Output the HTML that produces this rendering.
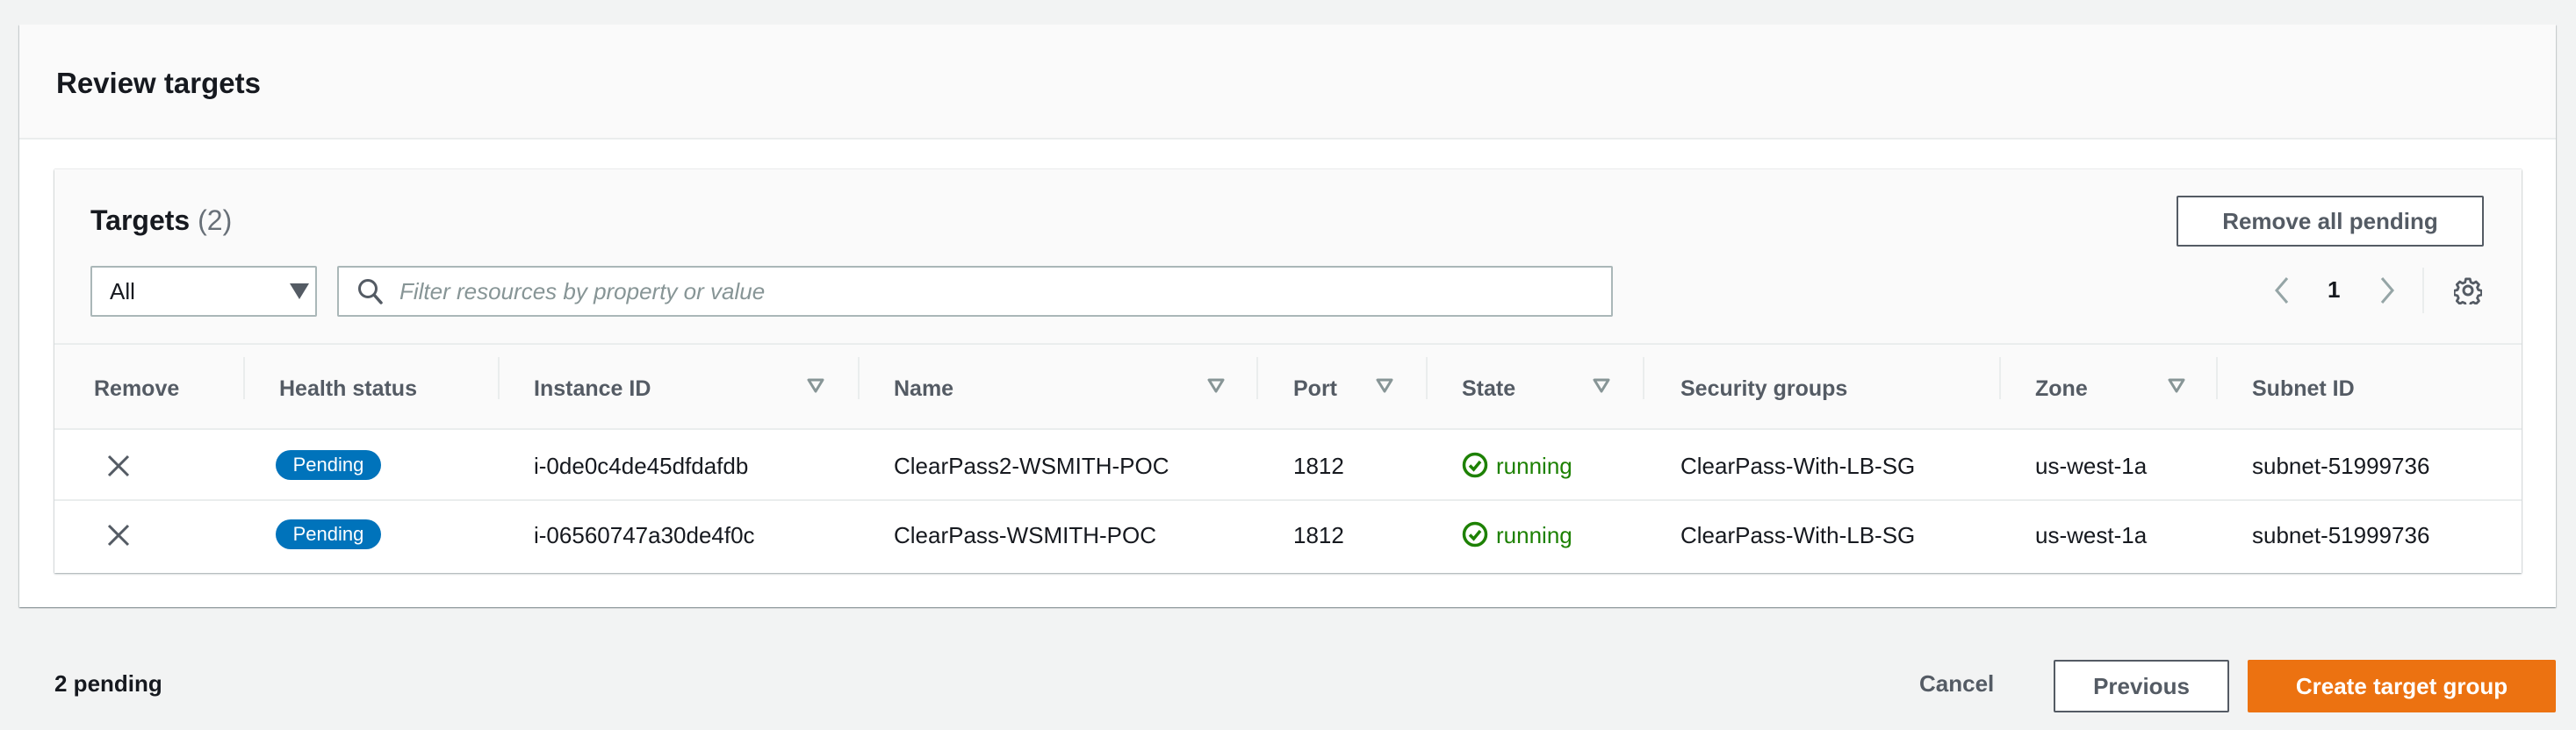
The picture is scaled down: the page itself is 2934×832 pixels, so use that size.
<!DOCTYPE html>
<html><head><meta charset="utf-8"><style>
*{box-sizing:border-box;margin:0;padding:0}
body{width:2934px;height:832px;background:#f2f3f3;font-family:"Liberation Sans",sans-serif;color:#16191f;position:relative;overflow:hidden}
.a{position:absolute;white-space:nowrap}
.card{position:absolute;left:22px;top:28px;width:2889px;height:664px;background:#fff;box-shadow:0 1px 1px rgba(0,28,36,.3),1px 1px 1px rgba(0,28,36,.15),-1px 1px 1px rgba(0,28,36,.15)}
.hdr{position:absolute;left:0;top:0;width:100%;height:131px;background:#fafafa;border-bottom:2px solid #eaeded}
.tbl{position:absolute;left:40px;top:165px;width:2810px;height:460px;background:#fff;box-shadow:0 1px 2px rgba(0,28,36,.35),0 0 1px rgba(0,28,36,.3)}
.th{position:absolute;left:0;top:0;width:100%;height:297px;background:#fafafa;border-bottom:2px solid #eaeded}
.hl{position:absolute;left:0;top:198px;width:100%;height:2px;background:#eaeded}
.col{font-weight:bold;color:#545b64;font-size:25px;top:236px}
.sep{position:absolute;top:214px;width:2px;height:48px;background:#eaeded}
.tri{position:absolute;top:238px}
.cell{font-size:26px;top:0}
.pend{position:absolute;width:120px;height:34px;border-radius:17px;background:#0073bb;color:#fff;font-size:22px;text-align:center;line-height:34px}
.btn{position:absolute;border:2px solid #545b64;border-radius:2px;background:#fff;color:#545b64;font-weight:bold;font-size:26px;text-align:center}
</style></head><body>
<div class="card">
 <div class="hdr"></div>
 <div class="a" style="left:42px;top:48px;font-size:33px;font-weight:bold">Review targets</div>
 <div class="tbl">
  <div class="th"></div>
  <div class="a" style="left:41px;top:40px;font-size:32px;font-weight:bold">Targets <span style="font-weight:normal;color:#687078">(2)</span></div>
  <div class="btn" style="left:2417px;top:30px;width:350px;height:58px;line-height:54px">Remove all pending</div>
  <div style="position:absolute;left:41px;top:110px;width:258px;height:58px;border:2px solid #aab7b8;border-radius:2px;background:#fff"></div>
  <div class="a" style="left:63px;top:124px;font-size:26px">All</div>
  <svg class="a" style="left:268px;top:130px" width="22" height="18"><path d="M0 0H22L11 18Z" fill="#545b64"/></svg>
  <div style="position:absolute;left:322px;top:110px;width:1453px;height:58px;border:2px solid #aab7b8;border-radius:2px;background:#fff"></div>
  <svg class="a" style="left:345px;top:124px" width="30" height="32"><circle cx="12" cy="12" r="9.5" fill="none" stroke="#545b64" stroke-width="3"/><path d="M19 19L27 28" stroke="#545b64" stroke-width="3.5" stroke-linecap="round"/></svg>
  <div class="a" style="left:393px;top:124px;font-size:26px;font-style:italic;color:#879596">Filter resources by property or value</div>
  <svg class="a" style="left:2528px;top:122px" width="18" height="32"><path d="M15 2L3 16L15 30" fill="none" stroke="#95a5a6" stroke-width="3"/></svg>
  <div class="a" style="left:2589px;top:122px;font-size:26px;font-weight:bold">1</div>
  <svg class="a" style="left:2648px;top:122px" width="18" height="32"><path d="M3 2L15 16L3 30" fill="none" stroke="#95a5a6" stroke-width="3"/></svg>
  <div class="sep" style="left:2697px;top:112px;height:52px"></div>
  <svg class="a" style="left:2733px;top:122px" width="32" height="32" viewBox="0 0 32 32"><path d="M13.5 2h5l1 4 3 1.5 3.5-2 3.5 3.5-2 3.5 1.3 3 4 1v5l-4 1-1.3 3 2 3.5-3.5 3.5-3.5-2-3 1.3-1 4h-5l-1-4-3-1.3-3.5 2-3.5-3.5 2-3.5-1.3-3-4-1v-5l4-1 1.3-3-2-3.5 3.5-3.5 3.5 2 3-1.3z" fill="none" stroke="#545b64" stroke-width="3" stroke-linejoin="round" transform="translate(1 1) scale(.93)"/><circle cx="16" cy="16" r="5" fill="none" stroke="#545b64" stroke-width="3"/></svg>
  <div class="hl"></div>
  <div class="a col" style="left:45px">Remove</div>
  <div class="sep" style="left:215px"></div>
  <div class="a col" style="left:256px">Health status</div>
  <div class="sep" style="left:505px"></div>
  <div class="a col" style="left:546px">Instance ID</div>
  <svg class="tri" style="left:857px" width="20" height="17"><path d="M2 2H18L10 15Z" fill="none" stroke="#879596" stroke-width="3" stroke-linejoin="round"/></svg>
  <div class="sep" style="left:915px"></div>
  <div class="a col" style="left:956px">Name</div>
  <svg class="tri" style="left:1313px" width="20" height="17"><path d="M2 2H18L10 15Z" fill="none" stroke="#879596" stroke-width="3" stroke-linejoin="round"/></svg>
  <div class="sep" style="left:1369px"></div>
  <div class="a col" style="left:1411px">Port</div>
  <svg class="tri" style="left:1505px" width="20" height="17"><path d="M2 2H18L10 15Z" fill="none" stroke="#879596" stroke-width="3" stroke-linejoin="round"/></svg>
  <div class="sep" style="left:1562px"></div>
  <div class="a col" style="left:1603px">State</div>
  <svg class="tri" style="left:1752px" width="20" height="17"><path d="M2 2H18L10 15Z" fill="none" stroke="#879596" stroke-width="3" stroke-linejoin="round"/></svg>
  <div class="sep" style="left:1809px"></div>
  <div class="a col" style="left:1852px">Security groups</div>
  <div class="sep" style="left:2215px"></div>
  <div class="a col" style="left:2256px">Zone</div>
  <svg class="tri" style="left:2407px" width="20" height="17"><path d="M2 2H18L10 15Z" fill="none" stroke="#879596" stroke-width="3" stroke-linejoin="round"/></svg>
  <div class="sep" style="left:2462px"></div>
  <div class="a col" style="left:2503px">Subnet ID</div>
  <div style="position:absolute;left:0;top:376px;width:100%;height:2px;background:#eaeded"></div>

  <div style="position:absolute;left:0;top:299px;width:100%;height:77px">
   <svg class="a" style="left:60px;top:26px" width="26" height="26"><path d="M2 2L24 24M24 2L2 24" stroke="#545b64" stroke-width="3"/></svg>
   <div class="pend" style="left:252px;top:21px">Pending</div>
   <div class="a cell" style="left:546px;top:24px">i-0de0c4de45dfdafdb</div>
   <div class="a cell" style="left:956px;top:24px">ClearPass2-WSMITH-POC</div>
   <div class="a cell" style="left:1411px;top:24px">1812</div>
   <svg class="a" style="left:1603px;top:23px" width="30" height="30"><circle cx="15" cy="15" r="12.5" fill="none" stroke="#1d8102" stroke-width="3.5"/><path d="M9 15.5L13.5 20L21 11" fill="none" stroke="#1d8102" stroke-width="3.5"/></svg>
   <div class="a cell" style="left:1642px;top:24px;color:#1d8102">running</div>
   <div class="a cell" style="left:1852px;top:24px">ClearPass-With-LB-SG</div>
   <div class="a cell" style="left:2256px;top:24px">us-west-1a</div>
   <div class="a cell" style="left:2503px;top:24px">subnet-51999736</div>
  </div>
  <div style="position:absolute;left:0;top:378px;width:100%;height:80px">
   <svg class="a" style="left:60px;top:26px" width="26" height="26"><path d="M2 2L24 24M24 2L2 24" stroke="#545b64" stroke-width="3"/></svg>
   <div class="pend" style="left:252px;top:21px">Pending</div>
   <div class="a cell" style="left:546px;top:24px">i-06560747a30de4f0c</div>
   <div class="a cell" style="left:956px;top:24px">ClearPass-WSMITH-POC</div>
   <div class="a cell" style="left:1411px;top:24px">1812</div>
   <svg class="a" style="left:1603px;top:23px" width="30" height="30"><circle cx="15" cy="15" r="12.5" fill="none" stroke="#1d8102" stroke-width="3.5"/><path d="M9 15.5L13.5 20L21 11" fill="none" stroke="#1d8102" stroke-width="3.5"/></svg>
   <div class="a cell" style="left:1642px;top:24px;color:#1d8102">running</div>
   <div class="a cell" style="left:1852px;top:24px">ClearPass-With-LB-SG</div>
   <div class="a cell" style="left:2256px;top:24px">us-west-1a</div>
   <div class="a cell" style="left:2503px;top:24px">subnet-51999736</div>
  </div>
 </div>
</div>
<div class="a" style="left:62px;top:764px;font-size:26px;font-weight:bold">2 pending</div>
<div class="a" style="left:2186px;top:764px;font-size:26px;font-weight:bold;color:#545b64">Cancel</div>
<div class="btn" style="left:2339px;top:752px;width:200px;height:60px;line-height:56px">Previous</div>
<div class="btn" style="left:2560px;top:752px;width:351px;height:60px;line-height:60px;background:#ec7211;border:none;color:#fff">Create target group</div>
</body></html>
